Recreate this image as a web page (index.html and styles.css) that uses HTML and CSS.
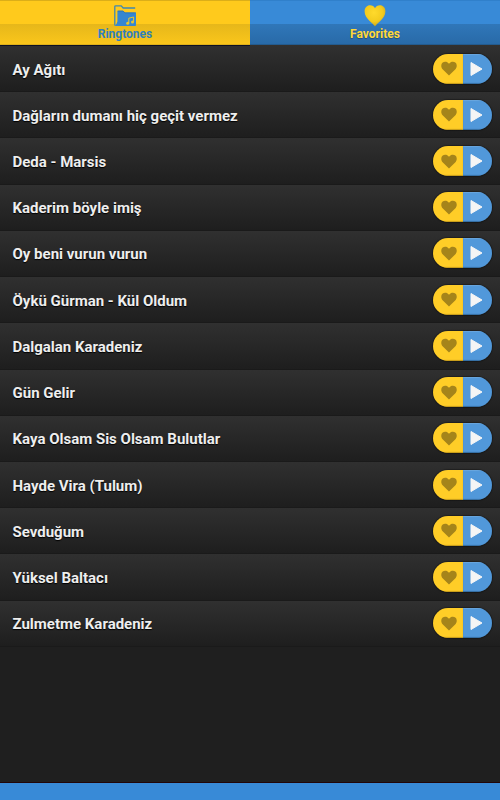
FILE: index.html
```html
<!DOCTYPE html>
<html lang="tr">
  <head>
    <meta charset="UTF-8" />
    <meta name="viewport" content="width=device-width, initial-scale=1.0" />
    <title>Ringtones</title>
    <link rel="stylesheet" href="styles.css">
  </head>
  <body>
    <div class="tabs">
      <div class="tab tab-active">
        <svg class="tab-icon" viewBox="0 0 24 22">
          <path d="M1.8 20.5V1.6Q1.8 .9 2.5 .9H8.2L10.2 3H22.2" fill="none" stroke="#4088b0" stroke-width="1.3" />
          <path d="M4.4 6.6Q4.4 5.8 5.2 5.8H10L12 7.6H22.2Q23 7.6 23 8.4V20.2Q23 21 22.2 21H1.6Q3.6 20 4.4 16.5Z" fill="#3486d2" />
          <path d="M4.6 6.1H10L12 7.9H22.8" fill="none" stroke="#2d72b0" stroke-width=".8" />
          <path d="M15.8 18V13.2L20.6 12V16.8" fill="none" stroke="#e9c72b" stroke-width="1" />
          <circle cx="14.7" cy="18.2" r="1.5" fill="#e9c72b" />
          <circle cx="19.5" cy="17" r="1.5" fill="#e9c72b" />
        </svg>
        <span>Ringtones</span>
      </div>
      <div class="tab">
        <svg class="tab-icon" viewBox="0 0 24 22">
          <defs>
            <radialGradient id="gold" cx=".45" cy=".35" r=".65">
              <stop offset="0" stop-color="#ffda2c" />
              <stop offset=".65" stop-color="#f3cb1e" />
              <stop offset="1" stop-color="#cfa91d" />
            </radialGradient>
          </defs>
          <path d="M12 21.3C10.3 18.3 1.6 13.5 1.6 6.4C1.6 2.6 4 .3 7 .3C9.3 .3 11.2 1.4 12 3.2C12.8 1.4 14.7 .3 17 .3C20 .3 22.4 2.6 22.4 6.4C22.4 13.5 13.7 18.3 12 21.3Z" fill="url(#gold)" />
        </svg>
        <span>Favorites</span>
      </div>
    </div>

    <div class="list" id="list"></div>

    <div class="footer"></div>

    <script>
      const songs = [
        "Ay Ağıtı",
        "Dağların dumanı hiç geçit vermez",
        "Deda - Marsis",
        "Kaderim böyle imiş",
        "Oy beni vurun vurun",
        "Öykü Gürman - Kül Oldum",
        "Dalgalan Karadeniz",
        "Gün Gelir",
        "Kaya Olsam Sis Olsam Bulutlar",
        "Hayde Vira (Tulum)",
        "Sevduğum",
        "Yüksel Baltacı",
        "Zulmetme Karadeniz",
      ];

      document.getElementById("list").innerHTML = songs
        .map(
          (song) => `
        <div class="row">
          <span class="title">${song}</span>
          <div class="actions">
            <button class="btn-fav" aria-label="Favorite">
              <svg width="16" height="15" viewBox="0 0 16 15">
                <path d="M8 14.6L1.6 8.2C-.2 6.3 -.1 3.2 1.4 1.7C3.2 .1 6.3 .3 8 2.7C9.7 .3 12.8 .1 14.6 1.7C16.1 3.2 16.2 6.3 14.4 8.2Z" />
              </svg>
            </button>
            <button class="btn-play" aria-label="Play">
              <svg width="14" height="16" viewBox="0 0 14 16">
                <path d="M1 1.5L12 8L1 14.5Z" />
              </svg>
            </button>
          </div>
        </div>`
        )
        .join("");
    </script>
  </body>
</html>
```

FILE: styles.css
```css
body {
  font-family: Roboto, "Liberation Sans", sans-serif;
  background-color: #1f1f1f;
  margin: 0;
  padding: 0;
  display: flex;
  flex-direction: column;
  height: 100vh;
  overflow: hidden;
}
.tabs {
  display: flex;
  height: 46px;
  flex-shrink: 0;
}
.tab {
  box-sizing: border-box;
  width: 250px;
  padding-top: 5px;
  display: flex;
  flex-direction: column;
  align-items: center;
  color: #ffd83a;
  font-size: 12px;
  font-weight: bold;
  line-height: 14px;
  border-bottom: 1px solid #33302d;
  background: linear-gradient(#3080cb 0, #3080cb 1px, #388ad7 1px, #388ad7 24px, #3077b9 24px, #286aa8 44px, #235b8e 44px);
  text-shadow: 0 1px 1px rgba(0, 0, 0, 0.3);
}
.tab-active {
  color: #2f80bd;
  border-bottom-color: #0d1223;
  background: linear-gradient(#dcae18 0, #dcae18 1px, #ffca1c 1px, #ffca1c 24px, #e6b71a 24px, #fac61b 44px, #deb01a 44px);
  text-shadow: none;
}
.tab-icon {
  width: 24px;
  height: 22px;
  flex-shrink: 0;
}
.tab span {
  margin-top: -0.5px;
}
.list {
  flex: 1;
}
.row {
  box-sizing: border-box;
  height: 46.23px;
  padding: 0 8px 0 12.5px;
  display: flex;
  align-items: center;
  justify-content: space-between;
  background: linear-gradient(#303030, #1e1e1e);
  border-bottom: 1px solid #1a1a1a;
}
.title {
  color: #eeeeee;
  font-size: 15px;
  font-weight: bold;
  line-height: 18px;
  padding-top: 2px;
  text-shadow: 0 1px 1px #000;
}
.actions {
  display: flex;
  width: 59px;
  height: 30px;
  border-radius: 15px;
  overflow: hidden;
  box-shadow: 0 0 1px 1px rgba(0, 0, 0, 0.3);
}
.actions button {
  display: flex;
  align-items: center;
  border: none;
  padding: 0;
  cursor: pointer;
}
.actions .btn-fav {
  width: 30px;
  padding-left: 8px;
  background-color: #ffcd27;
  box-shadow: inset 0 -1px 1px #c49a1b;
}
.btn-fav svg {
  fill: #a5841a;
}
.btn-play {
  width: 29px;
  background-color: #5198da;
  box-shadow: inset 0 -1px 1px #346c9f, inset 0 1px 1px #6aa7de;
}
.btn-play svg {
  margin-left: 7px;
  fill: #f5f5f5;
  stroke: #f5f5f5;
  stroke-width: 1;
  stroke-linejoin: round;
}
.footer {
  height: 17px;
  flex-shrink: 0;
  background-color: #388ad7;
  border-top: 1px solid #210609;
}
```
